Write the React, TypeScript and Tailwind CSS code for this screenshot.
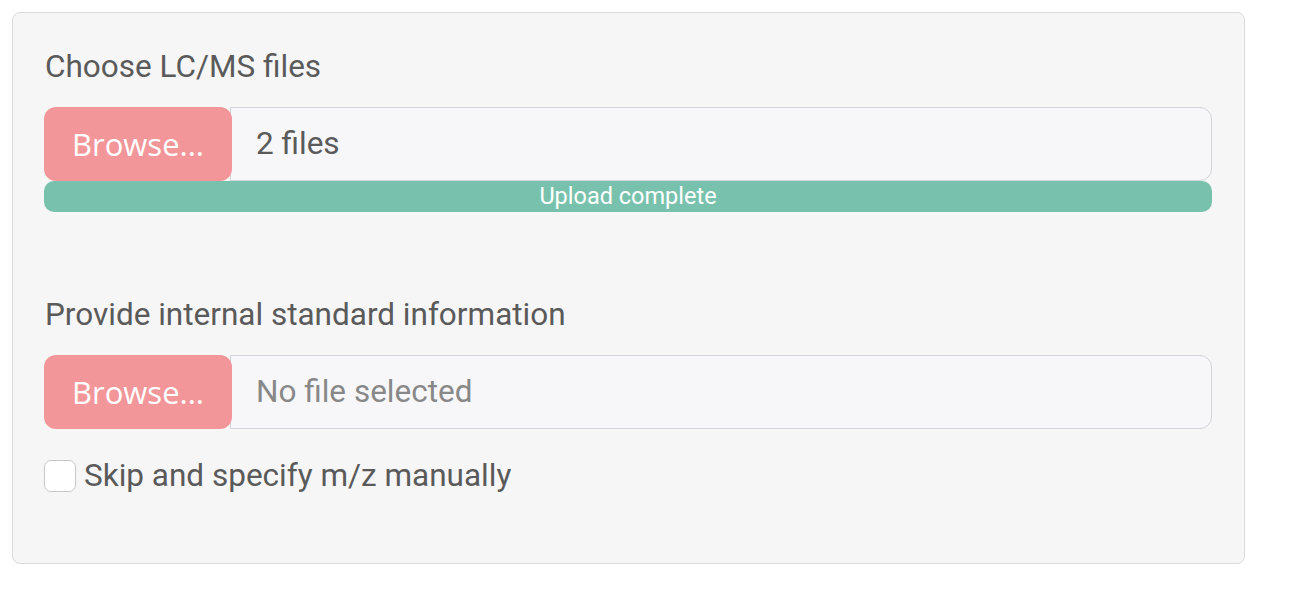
export default function App() {
  return (
    <div className="w-[1289px] h-[610px] bg-white pt-[12px] pl-[12px]" style={{ fontFamily: "Roboto, 'Liberation Sans', sans-serif" }}>
      <div className="w-[1233px] h-[552px] bg-[#f6f6f6] border border-[#dadada] rounded-[8px] pt-[36px] pl-[31px] pr-[32px]">
        <div className="text-[31.5px] leading-[36px] text-[#5a5a5a] pl-[1px]">Choose LC/MS files</div>
        <div className="mt-[22px] flex h-[74px]">
          <div className="relative z-10 w-[188px] h-[74px] bg-[#f3969a] rounded-[12px] flex items-center justify-center text-white text-[31px]" style={{ fontFamily: "'Open Sans', sans-serif" }}>Browse...</div>
          <div className="flex-1 h-[74px] -ml-[2px] bg-[#f7f7f9] border border-[#d3d5da] rounded-r-[12px] flex items-center pl-[25px] text-[31.5px] text-[#5a5a5a]">2 files</div>
        </div>
        <div className="h-[31px] bg-[#78c2ad] rounded-[10px] flex items-center justify-center text-white text-[23.5px] pt-[1px]">Upload complete</div>
        <div className="mt-[85px] text-[31.5px] leading-[36px] text-[#5a5a5a] pl-[1px]">Provide internal standard information</div>
        <div className="mt-[22px] flex h-[74px]">
          <div className="relative z-10 w-[188px] h-[74px] bg-[#f3969a] rounded-[12px] flex items-center justify-center text-white text-[31px]" style={{ fontFamily: "'Open Sans', sans-serif" }}>Browse...</div>
          <div className="flex-1 h-[74px] -ml-[2px] bg-[#f7f7f9] border border-[#d3d5da] rounded-r-[12px] flex items-center pl-[25px] text-[31.5px] text-[#888888]">No file selected</div>
        </div>
        <div className="mt-[29px] flex items-center gap-[8px]">
          <div className="w-[32px] h-[32px] bg-white border border-[#c8c8c8] rounded-[7px]" />
          <div className="text-[31.5px] leading-[36px] text-[#5a5a5a]">Skip and specify m/z manually</div>
        </div>
      </div>
    </div>
  );
}
